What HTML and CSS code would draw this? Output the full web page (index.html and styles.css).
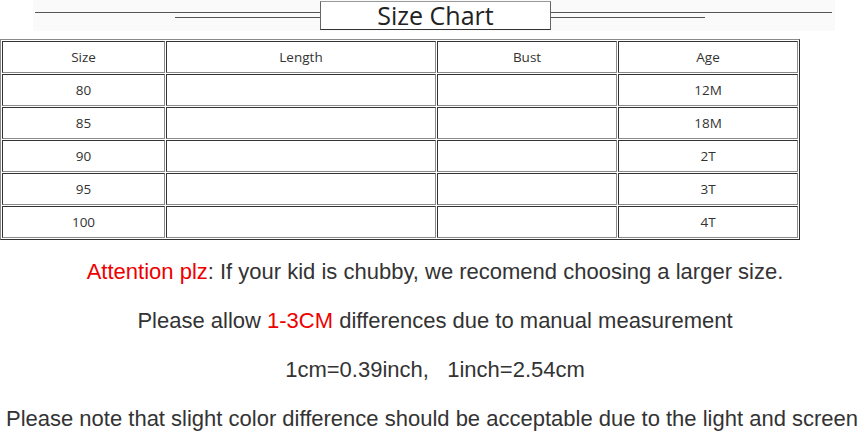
FILE: index.html
```html
<!DOCTYPE html>
<html>
<head>
<meta charset="utf-8">
<link rel="stylesheet" href="styles.css">
</head>
<body>
<div class="header">
  <div class="rule rule-left">
    <span class="line line-long"></span>
    <span class="line line-short"></span>
  </div>
  <div class="title"><span class="title-text">Size Chart</span></div>
  <div class="rule rule-right">
    <span class="line line-long"></span>
    <span class="line line-short"></span>
  </div>
</div>
<table class="chart">
  <colgroup>
    <col class="c1"><col class="c2"><col class="c3"><col class="c4">
  </colgroup>
  <tr><td>Size</td><td>Length</td><td>Bust</td><td>Age</td></tr>
  <tr><td>80</td><td></td><td></td><td>12M</td></tr>
  <tr><td>85</td><td></td><td></td><td>18M</td></tr>
  <tr><td>90</td><td></td><td></td><td>2T</td></tr>
  <tr><td>95</td><td></td><td></td><td>3T</td></tr>
  <tr><td>100</td><td></td><td></td><td>4T</td></tr>
</table>
<div class="notes">
  <p class="note"><span class="red">Attention plz</span>: If your kid is chubby, we recomend choosing a larger size.</p>
  <p class="note">Please allow <span class="red">1-3CM</span> differences due to manual measurement</p>
  <p class="note">1cm=0.39inch,&nbsp;&nbsp; 1inch=2.54cm</p>
  <p class="note note-wide">Please note that slight color difference should be acceptable due to the light and screen</p>
</div>
</body>
</html>
```

FILE: styles.css
```css
html, body {
  margin: 0;
  padding: 0;
  background: #ffffff;
}
body {
  font-family: "Liberation Sans", Arial, sans-serif;
  color: #333333;
  width: 860px;
  overflow: hidden;
}
.header {
  display: flex;
  margin-left: 33px;
  width: 802px;
  height: 31px;
  padding-left: 2px;
  box-sizing: border-box;
  background: #fafafa;
}
.rule {
  display: flex;
  flex-direction: column;
  width: 285px;
}
.rule-right {
  width: 281px;
}
.line {
  display: block;
  height: 1px;
  background: #555555;
}
.line-long {
  margin-top: 12px;
}
.line-short {
  margin-top: 4px;
}
.rule-left .line-short {
  margin-left: 140px;
}
.rule-right .line-short {
  width: 154px;
}
.title {
  margin-top: 1px;
  width: 231px;
  height: 29px;
  box-sizing: border-box;
  border: 1px solid #666666;
  border-top-color: #999999;
  border-bottom-color: #333333;
  background: #ffffff;
  display: flex;
  justify-content: center;
  align-items: center;
}
.title-text {
  font-family: "Open Sans", "Noto Sans", sans-serif;
  font-size: 25px;
  line-height: 27px;
  color: #222222;
}
.chart {
  margin-top: 8px;
  width: 800px;
  border-collapse: separate;
  border-spacing: 1px;
  border: 1px solid;
  border-color: #8a8a8a #333333 #333333 #8a8a8a;
  font-family: "Open Sans", "Noto Sans", sans-serif;
  font-size: 13.5px;
  color: #333333;
  table-layout: fixed;
}
.c1 { width: 163px; }
.c2 { width: 270px; }
.c3 { width: 180px; }
.c4 { width: 180px; }
.chart td {
  height: 32px;
  box-sizing: border-box;
  padding: 0;
  border: 1px solid;
  border-color: #333333 #8a8a8a #8a8a8a #333333;
  text-align: center;
  vertical-align: middle;
}
.notes {
  margin-top: 7px;
  padding-left: 10px;
  font-size: 22px;
  color: #333333;
}
.note {
  margin: 0;
  height: 49px;
  line-height: 49px;
  text-align: center;
  white-space: nowrap;
}
.note-wide {
  margin-left: -16px;
  margin-right: -10px;
}
.red {
  color: #ee0000;
}
```
